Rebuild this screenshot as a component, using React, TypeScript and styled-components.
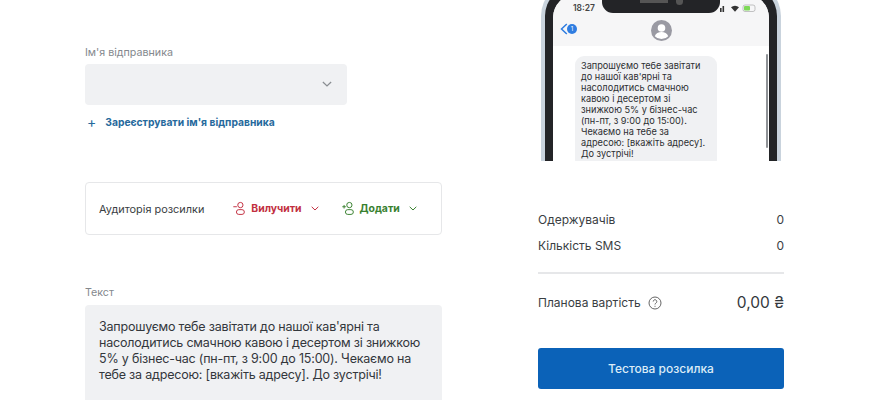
import * as React from 'react';
import styled, {createGlobalStyle} from 'styled-components';

const GlobalStyle = createGlobalStyle`
    html, body {
        margin: 0;
        padding: 0;
        background: #fff;
        font-family: "Inter", "Noto Sans", sans-serif;
        color: #2f3338;
        overflow: hidden;
    }
`;

const UserIcon = ({sign}: {sign: '+' | '-'}) => (
    <svg width="15" height="15" viewBox="0 0 17 17" fill="none" stroke="currentColor" strokeWidth="1.100">
        <circle cx="9.500" cy="4.600" r="3"/>
        <rect x="5" y="9.800" width="9" height="5.400" rx="2.700"/>
        <path d={sign === '+' ? 'M1.500 6.500h4M3.500 4.500v4' : 'M1.500 6.500h4'}/>
    </svg>
);

const Chevron = ({size = 8}: {size?: number}) => (
    <svg width={size} height={size * 0.625} viewBox="0 0 8 5" fill="none" stroke="currentColor" strokeWidth="1">
        <path d="M0.700 0.800 4 4l3.300-3.200"/>
    </svg>
);

const App = () => {
    return (
        <Page>
            <GlobalStyle/>
            <LeftColumn>
                <FieldLabel>Ім'я відправника</FieldLabel>
                <SenderSelect>
                    <SelectArrow><Chevron size={10}/></SelectArrow>
                </SenderSelect>
                <RegisterLink>
                    <PlusMark>+</PlusMark>
                    Зареєструвати ім'я відправника
                </RegisterLink>

                <AudienceCard>
                    <AudienceTitle>Аудиторія розсилки</AudienceTitle>
                    <AudienceAction $color="#c22f41">
                        <UserIcon sign="-"/>
                        <span>Вилучити</span>
                        <Chevron/>
                    </AudienceAction>
                    <AudienceAction $color="#39812f">
                        <UserIcon sign="+"/>
                        <span>Додати</span>
                        <Chevron/>
                    </AudienceAction>
                </AudienceCard>

                <TextLabel>Текст</TextLabel>
                <MessageBox>
                    Запрошуємо тебе завітати до нашої кав'ярні та насолодитись смачною кавою і десертом зі знижкою 5% у бізнес-час (пн-пт, з 9:00 до 15:00). Чекаємо на тебе за адресою: [вкажіть адресу]. До зустрічі!
                </MessageBox>
            </LeftColumn>

            <RightColumn>
                <PhoneFrame>
                    <PhoneScreen>
                        <StatusBar>
                            <Clock>18:27</Clock>
                            <Notch>
                                <NotchSpeaker/>
                                <NotchCamera/>
                            </Notch>
                            <StatusIcons>
                                <svg width="38" height="8" viewBox="0 0 38 8">
                                    <rect x="0" y="4" width="1.600" height="4" fill="#333"/>
                                    <rect x="2.500" y="2" width="1.600" height="6" fill="#333"/>
                                    <path d="M11 3.200a6 6 0 0 1 8 0l-4 4.600z" fill="#333"/>
                                    <rect x="23" y="1" width="12" height="6.500" rx="2" fill="none" stroke="#aaa" strokeWidth=".7"/>
                                    <rect x="24" y="2" width="6" height="4.500" rx="1" fill="#7ed957"/>
                                </svg>
                            </StatusIcons>
                        </StatusBar>
                        <ChatHeader>
                            <BackButton>
                                <svg width="8" height="12" viewBox="0 0 8 12" fill="none" stroke="#2f7de1" strokeWidth="1.500">
                                    <path d="M6.800 1 1.500 6l5.300 5"/>
                                </svg>
                                <UnreadBadge>1</UnreadBadge>
                            </BackButton>
                            <Avatar>
                                <svg width="21" height="21" viewBox="0 0 21 21">
                                    <circle cx="10.500" cy="10.500" r="10.500" fill="#9a9aa3"/>
                                    <circle cx="10.500" cy="8" r="3.800" fill="#fff"/>
                                    <path d="M3.800 16.200c1-3 3.600-4.200 6.700-4.200s5.700 1.200 6.700 4.200a9.200 9.200 0 0 1-13.400 0z" fill="#fff"/>
                                </svg>
                            </Avatar>
                        </ChatHeader>
                        <ChatBody>
                            <Bubble>
                                Запрошуємо тебе завітати до нашої кав'ярні та насолодитись смачною кавою і десертом зі знижкою 5% у бізнес-час (пн-пт, з 9:00 до 15:00). Чекаємо на тебе за адресою: [вкажіть адресу]. До зустрічі!
                            </Bubble>
                            <ScrollThumb/>
                        </ChatBody>
                    </PhoneScreen>
                </PhoneFrame>

                <Stats>
                    <StatRow>
                        <span>Одержувачів</span>
                        <span>0</span>
                    </StatRow>
                    <StatRow>
                        <span>Кількість SMS</span>
                        <span>0</span>
                    </StatRow>
                </Stats>
                <CostRow>
                    <CostLabel>
                        Планова вартість
                        <svg width="14" height="14" viewBox="0 0 14 14" fill="none" stroke="#555" strokeWidth=".9">
                            <circle cx="7" cy="7" r="6"/>
                            <path d="M5.200 5.500a1.800 1.800 0 1 1 2.700 1.600c-.6.400-.9.700-.9 1.400"/>
                            <path d="M7 9.800v1"/>
                        </svg>
                    </CostLabel>
                    <CostValue>0,00 ₴</CostValue>
                </CostRow>
                <TestButton>Тестова розсилка</TestButton>
            </RightColumn>
        </Page>
    );
};

export default App;

const Page = styled.div`
    width: 870px;
    height: 400px;
    display: flex;
    overflow: hidden;
    padding-left: 85px;
    box-sizing: border-box;
`;

const LeftColumn = styled.div`
    width: 357px;
    padding-top: 46px;
    flex-shrink: 0;
`;

const FieldLabel = styled.div`
    font-size: 10.700px;
    line-height: 13px;
    color: #84888d;
    margin-bottom: 5px;
`;

const SenderSelect = styled.div`
    width: 262px;
    height: 41px;
    background: #f0f1f3;
    border-radius: 4px;
    display: flex;
    align-items: center;
    justify-content: flex-end;
    padding-right: 15px;
    box-sizing: border-box;
`;

const SelectArrow = styled.span`
    color: #8a8e92;
    display: flex;
`;

const RegisterLink = styled.a`
    display: flex;
    align-items: center;
    gap: 9px;
    margin-top: 10px;
    font-size: 10.300px;
    line-height: 14px;
    font-weight: 700;
    color: #26699c;
`;

const PlusMark = styled.span`
    font-size: 14px;
    font-weight: 400;
    margin-left: 2px;
`;

const AudienceCard = styled.div`
    margin-top: 53px;
    width: 357px;
    height: 53px;
    box-sizing: border-box;
    border: 1px solid #e6e7e9;
    border-radius: 4px;
    display: flex;
    align-items: center;
    padding-left: 13px;
`;

const AudienceTitle = styled.span`
    font-size: 10.900px;
    color: #3a3e43;
    margin-right: 28px;
    white-space: nowrap;
`;

const AudienceAction = styled.div<{$color: string}>`
    display: flex;
    align-items: center;
    gap: 2px;
    color: ${props => props.$color};
    font-size: 10.400px;
    font-weight: 700;
    margin-right: 22px;

    span {
        margin-left: 2px;
        margin-right: 7px;
    }
`;

const TextLabel = styled(FieldLabel)`
    margin-top: 51px;
    margin-bottom: 6px;
`;

const MessageBox = styled.div`
    width: 357px;
    height: 120px;
    box-sizing: border-box;
    background: #f0f1f3;
    border-radius: 4px;
    padding: 14px 14px;
    font-size: 12.500px;
    letter-spacing: -0.2px;
    line-height: 16px;
    color: #33373c;
`;

const RightColumn = styled.div`
    width: 246px;
    margin-left: 96px;
    flex-shrink: 0;
`;

const PhoneFrame = styled.div`
    width: 240px;
    height: 179px;
    margin: -18px 0 0 3px;
    box-sizing: border-box;
    border: solid #c9d3dd;
    border-width: 4px 4px 0;
    border-radius: 34px 34px 0 0;
    background: #232427;
    padding: 8px 8px 0;
`;

const PhoneScreen = styled.div`
    height: 167px;
    background: #fff;
    border-radius: 24px 24px 0 0;
    overflow: hidden;
`;

const StatusBar = styled.div`
    height: 20px;
    box-sizing: border-box;
    padding: 7px 11px 0 20px;
    background: #f6f6f7;
    display: flex;
    justify-content: space-between;
    align-items: center;
    position: relative;
`;

const Clock = styled.span`
    font-size: 8.500px;
    font-weight: 600;
    color: #444;
`;

const Notch = styled.div`
    position: absolute;
    left: 49px;
    top: 0;
    width: 118px;
    height: 19px;
    background: #232427;
    border-radius: 0 0 11px 11px;
    display: flex;
    justify-content: center;
    gap: 8px;
`;

const NotchSpeaker = styled.div`
    width: 28px;
    height: 9px;
    background: #555;
`;

const NotchCamera = styled.div`
    width: 7px;
    height: 11px;
    background: #555;
    border-radius: 0 0 4px 4px;
`;

const StatusIcons = styled.span`
    display: flex;
`;

const ChatHeader = styled.div`
    height: 32px;
    box-sizing: border-box;
    padding-top: 6px;
    background: #f6f6f7;
    position: relative;
    display: flex;
    align-items: flex-start;
    justify-content: center;
`;

const BackButton = styled.div`
    position: absolute;
    left: 7px;
    top: 9px;
    display: flex;
    align-items: center;
`;

const UnreadBadge = styled.span`
    width: 10px;
    height: 10px;
    border-radius: 50%;
    background: #2f7de1;
    color: #fff;
    font-size: 6px;
    line-height: 10px;
    text-align: center;
    margin-left: -1px;
`;

const Avatar = styled.div`
    display: flex;
`;

const ChatBody = styled.div`
    position: relative;
    padding: 10px 0 0 22px;
`;

const Bubble = styled.div`
    width: 142px;
    height: 112px;
    box-sizing: border-box;
    background: #f0f1f3;
    border-radius: 9px;
    padding: 4px 6px;
    font-size: 9.200px;
    line-height: 11px;
    color: #2c2e31;
`;

const ScrollThumb = styled.div`
    position: absolute;
    right: 1px;
    top: 8px;
    width: 2px;
    height: 94px;
    background: #8f9296;
    border-radius: 1px;
`;

const Stats = styled.div`
    margin-top: 51px;
    display: flex;
    flex-direction: column;
    gap: 10px;
    padding-bottom: 18px;
    border-bottom: 2px solid #e6e7e9;
`;

const StatRow = styled.div`
    display: flex;
    justify-content: space-between;
    font-size: 12px;
    line-height: 16px;
    color: #3a3e43;
`;

const CostRow = styled.div`
    display: flex;
    justify-content: space-between;
    align-items: center;
    margin-top: 19px;
`;

const CostLabel = styled.div`
    display: flex;
    align-items: center;
    gap: 7px;
    font-size: 12px;
    color: #3a3e43;
`;

const CostValue = styled.div`
    font-size: 15.500px;
    font-weight: 400;
    color: #33373c;
`;

const TestButton = styled.button`
    display: block;
    width: 246px;
    height: 41px;
    margin-top: 36px;
    border: none;
    border-radius: 3px;
    background: #0b62b8;
    color: #dcecf7;
    font-family: inherit;
    font-size: 12px;
    font-weight: 500;
`;
